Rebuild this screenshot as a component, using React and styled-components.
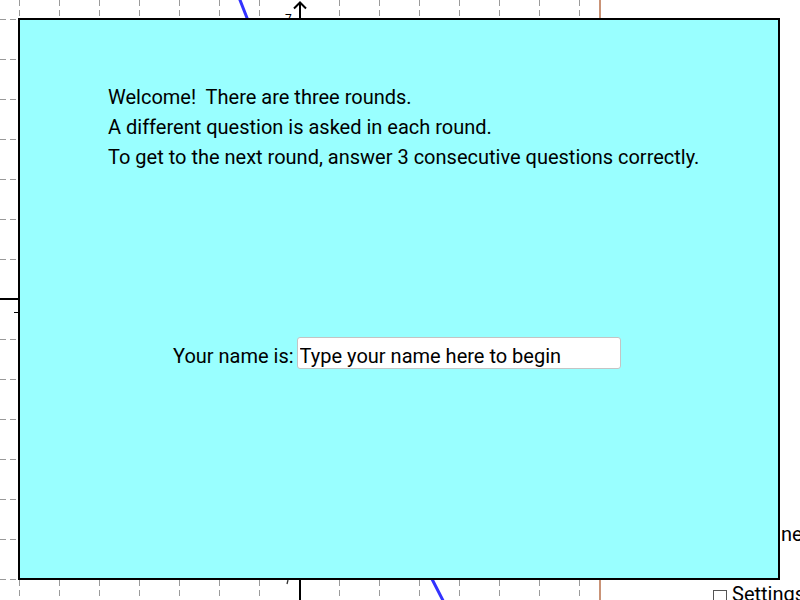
import React from "react";
import styled, { createGlobalStyle } from "styled-components";

const GlobalStyle = createGlobalStyle`
  html, body {
    margin: 0;
    padding: 0;
    background: #ffffff;
    overflow: hidden;
  }
  body {
    font-family: Roboto, "Liberation Sans", sans-serif;
    color: #000;
  }
`;

const Stage = styled.div`
  position: relative;
  width: 800px;
  height: 600px;
  overflow: hidden;
  background: #fff;
`;

const Graph = styled.svg`
  position: absolute;
  inset: 0;
  display: block;
`;

const CanvasText = styled.span`
  position: absolute;
  left: ${(p) => p.$x}px;
  top: ${(p) => p.$y}px;
  font-size: 20px;
  line-height: 23px;
  white-space: nowrap;
  display: flex;
  align-items: center;
  gap: 5px;
`;

const Box = styled.span`
  display: inline-block;
  width: 14px;
  height: 14px;
  margin-top: 4px;
  border: 1px solid #555;
  box-sizing: border-box;
  background: #fff;
`;

const Panel = styled.section`
  position: absolute;
  left: 18px;
  top: 18px;
  width: 762px;
  height: 562px;
  box-sizing: border-box;
  border: 2px solid #000;
  background: #99ffff;
  display: flex;
  flex-direction: column;
`;

const Intro = styled.div`
  padding: 62px 0 0 88px;
  font-size: 20px;
  line-height: 30px;
  white-space: pre;
`;

const NameRow = styled.label`
  display: flex;
  align-items: baseline;
  gap: 3px;
  margin-top: 165px;
  padding-left: 153px;
  font-size: 20px;
`;

const NameInput = styled.input`
  width: 324px;
  height: 32px;
  box-sizing: border-box;
  border: 1px solid #c4c4c4;
  border-radius: 3px;
  background: #fff;
  padding: 6px 2px 0 2px;
  margin: 0;
  font-family: Roboto, "Liberation Sans", sans-serif;
  font-size: 20px;
  line-height: 23px;
  color: #000;
  outline: none;
`;

const gridX = Array.from({ length: 15 }, (_, k) => 19 + 40 * k).filter((x) => x !== 299);
const gridY = Array.from({ length: 15 }, (_, k) => 19 + 40 * k).filter((y) => y !== 299);

function Plot() {
  return (
    <Graph width="800" height="600" viewBox="0 0 800 600">
      <g stroke="#9a9a9a" strokeWidth="1" strokeDasharray="6 4" fill="none">
        {gridX.map((x) => (
          <line key={"v" + x} x1={x + 0.5} y1="0" x2={x + 0.5} y2="600" />
        ))}
        {gridY.map((y) => (
          <line key={"h" + y} x1="0" y1={y + 0.5} x2="600" y2={y + 0.5} />
        ))}
      </g>
      <line x1="600" y1="0" x2="600" y2="600" stroke="#c99377" strokeWidth="2" />
      <line x1="0" y1="299" x2="600" y2="299" stroke="#000" strokeWidth="2" />
      <line x1="300" y1="2" x2="300" y2="600" stroke="#000" strokeWidth="2" />
      <polyline points="294,8.5 300,2.5 306,8.5" fill="none" stroke="#000" strokeWidth="2" />
      <line x1="14" y1="312.5" x2="19" y2="312.5" stroke="#000" strokeWidth="1" />
      <text x="285" y="23" fontSize="12" fontFamily="Roboto, sans-serif" fill="#000">7</text>
      <line x1="288" y1="580" x2="287" y2="584" stroke="#333" strokeWidth="1.3" />
      <path
        d="M238.4 -4 L248.6 22 M429.4 574 L444.8 604"
        stroke="#3333ff"
        strokeWidth="3"
        fill="none"
      />
    </Graph>
  );
}

export default function App() {
  return (
    <>
      <GlobalStyle />
      <Stage>
        <Plot />
        <CanvasText $x={781} $y={523}>ne</CanvasText>
        <CanvasText $x={713} $y={583}>
          <Box />
          Settings
        </CanvasText>
        <Panel>
          <Intro>
            {"Welcome!  There are three rounds.\nA different question is asked in each round.\nTo get to the next round, answer 3 consecutive questions correctly."}
          </Intro>
          <NameRow>
            Your name is:
            <NameInput defaultValue="Type your name here to begin" />
          </NameRow>
        </Panel>
      </Stage>
    </>
  );
}
